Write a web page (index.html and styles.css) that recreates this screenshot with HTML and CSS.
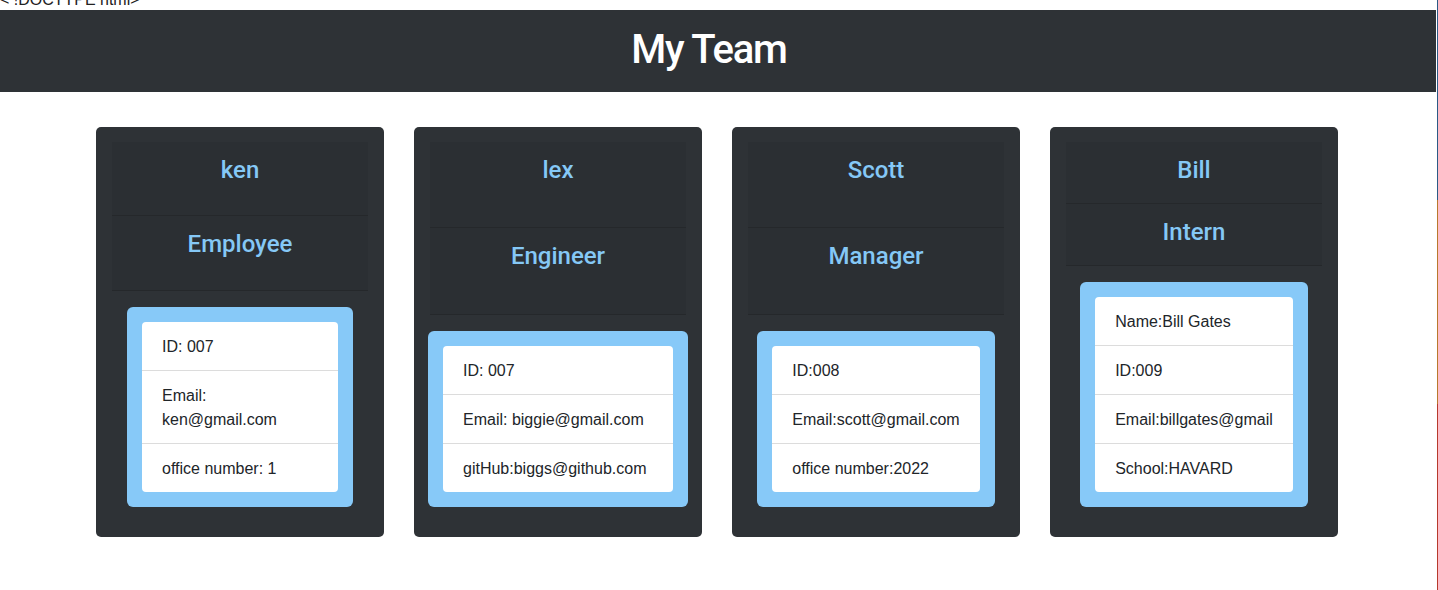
FILE: index.html
```html
<!DOCTYPE html>
<html lang="en">
<head>
<meta charset="utf-8">
<title>My Team</title>
<link rel="stylesheet" href="styles.css">
</head>
<body>
<div class="stray">&lt; !DOCTYPE html&gt;</div>
<header class="topbar">
  <h1 class="title">My Team</h1>
</header>
<main class="team">
  <section class="card">
    <div class="card-head">
      <h4 class="row-title">ken</h4>
      <h4 class="row-title">Employee</h4>
    </div>
    <div class="info narrow">
      <ul class="list">
        <li class="item">ID: 007</li>
        <li class="item">Email: ken@gmail.com</li>
        <li class="item">office number: 1</li>
      </ul>
    </div>
  </section>
  <section class="card">
    <div class="card-head">
      <h4 class="row-title">lex</h4>
      <h4 class="row-title">Engineer</h4>
    </div>
    <div class="info wide">
      <ul class="list">
        <li class="item">ID: 007</li>
        <li class="item">Email: biggie@gmail.com</li>
        <li class="item">gitHub:biggs@github.com</li>
      </ul>
    </div>
  </section>
  <section class="card">
    <div class="card-head">
      <h4 class="row-title">Scott</h4>
      <h4 class="row-title">Manager</h4>
    </div>
    <div class="info">
      <ul class="list">
        <li class="item">ID:008</li>
        <li class="item">Email:scott@gmail.com</li>
        <li class="item">office number:2022</li>
      </ul>
    </div>
  </section>
  <section class="card">
    <div class="card-head">
      <h4 class="row-title">Bill</h4>
      <h4 class="row-title">Intern</h4>
    </div>
    <div class="info">
      <ul class="list">
        <li class="item">Name:Bill Gates</li>
        <li class="item">ID:009</li>
        <li class="item">Email:billgates@gmail</li>
        <li class="item">School:HAVARD</li>
      </ul>
    </div>
  </section>
</main>
</body>
</html>
```
FILE: styles.css
```css
* { box-sizing: border-box; }

html, body {
  margin: 0;
  padding: 0;
  background: #ffffff;
}

body {
  font-family: "Liberation Sans", Arial, sans-serif;
  font-size: 16px;
  color: #212529;
  overflow: hidden;
}

body::after {
  content: "";
  position: fixed;
  top: 0;
  right: 0;
  width: 1px;
  height: 100%;
  background: linear-gradient(to bottom, #2b5a86 0, #2b5a86 200px, #b8782c 200px, #b8782c 404px, #b63a2c 404px, #b63a2c 100%);
}

.stray {
  margin-top: -9px;
  height: 19px;
  line-height: 18px;
  font-size: 16px;
  color: #222;
  white-space: nowrap;
}

.topbar {
  background: #2e3236;
  margin-right: 2px;
  height: 82px;
  display: flex;
  align-items: center;
  justify-content: center;
  padding-right: 18px;
}

.title {
  margin: 0;
  font-family: Roboto, "Liberation Sans", sans-serif;
  font-weight: 500;
  font-size: 40px;
  line-height: 48px;
  letter-spacing: -1.2px;
  color: #ffffff;
  padding-bottom: 2px;
}

.team {
  display: flex;
  gap: 30px;
  padding: 35px 0 0 96px;
  align-items: stretch;
}

.card {
  width: 288px;
  flex: 0 0 288px;
  background: #2e3236;
  border-radius: 5px;
  padding: 15px 16px 30px;
  display: flex;
  flex-direction: column;
}

.card-head {
  flex: 1;
  display: flex;
  flex-direction: column;
}

.row-title {
  flex: 1;
  margin: 0;
  padding: 14px 20px 18px;
  background: #2b2f33;
  border-bottom: 1px solid #25282b;
  text-align: center;
  font-family: Roboto, "Liberation Sans", sans-serif;
  font-weight: 500;
  font-size: 24px;
  line-height: 28.8px;
  color: #85c8f6;
}

.info {
  align-self: center;
  margin-top: 16px;
  background: #87c9f8;
  border-radius: 6px;
  padding: 15px;
  width: fit-content;
}

.info.narrow {
  width: 226px;
}

.info.wide {
  width: 260px;
}

.list {
  list-style: none;
  margin: 0;
  padding: 0;
  background: #ffffff;
  border-radius: 4px;
}

.item {
  padding: 13px 20px 11px;
  line-height: 24px;
}

.item + .item {
  border-top: 1px solid #dcdcdc;
}

.info:not(.narrow) .item {
  white-space: nowrap;
}
```
